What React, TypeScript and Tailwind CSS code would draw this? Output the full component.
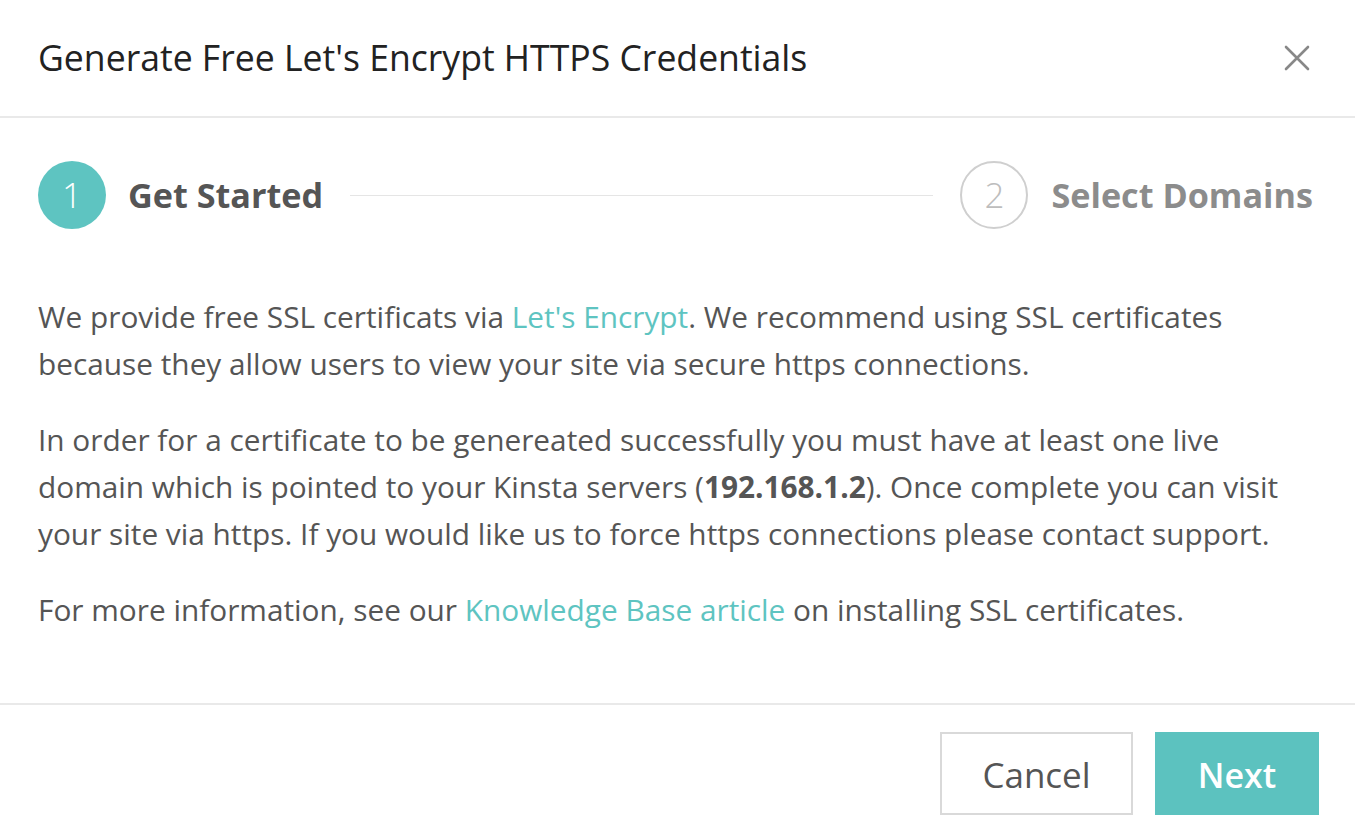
export default function App() {
  return (
    <div className="w-full h-[832px] bg-white overflow-hidden text-[#555]" style={{ fontFamily: '"Open Sans", "Noto Sans", sans-serif' }}>
      <div className="h-[118px] pl-[38px] pr-[44px] flex items-center justify-between border-b-2 border-[#e9e9e9]">
        <h1 className="text-[35.6px] text-[#222]">Generate Free Let's Encrypt HTTPS Credentials</h1>
        <button className="w-[28px] h-[28px] flex items-center justify-center text-[#888]">
          <svg width="26" height="26" viewBox="0 0 26 26" fill="none" stroke="currentColor" strokeWidth="2.6" strokeLinecap="round">
            <path d="M2 2L24 24M24 2L2 24" />
          </svg>
        </button>
      </div>

      <div className="pt-[43px] pl-[38px] pr-[42px] flex items-center">
        <div className="w-[68px] h-[68px] rounded-full bg-[#5ec4c1] text-white flex items-center justify-center text-[35px] font-light">1</div>
        <span className="ml-[22px] text-[34.2px] font-bold text-[#555]">Get Started</span>
        <div className="flex-1 h-px bg-[#e5e5e5] mx-[27px]" />
        <div className="w-[68px] h-[68px] rounded-full border-2 border-[#cfcfcf] text-[#bdbdbd] flex items-center justify-center text-[35px] font-light">2</div>
        <span className="ml-[23px] text-[34.2px] font-bold text-[#8c8c8c]">Select Domains</span>
      </div>

      <div className="pt-[64px] px-[38px] text-[29.8px] leading-[47px] text-[#555] whitespace-nowrap flex flex-col gap-[29px]">
        <p>
          We provide free SSL certificats via <a className="text-[#5ec4c1]">Let's Encrypt</a>. We recommend using SSL certificates
          <br />
          because they allow users to view your site via secure https connections.
        </p>
        <p>
          In order for a certificate to be genereated successfully you must have at least one live
          <br />
          domain which is pointed to your Kinsta servers (<b className="font-bold">192.168.1.2</b>). Once complete you can visit
          <br />
          your site via https. If you would like us to force https connections please contact support.
        </p>
        <p>
          For more information, see our <a className="text-[#5ec4c1]">Knowledge Base article</a> on installing SSL certificates.
        </p>
      </div>

      <div className="mt-[70px] border-t-2 border-[#e9e9e9] pt-[27px] pr-[36px] flex justify-end gap-[22px]">
        <button className="w-[193px] h-[83px] pt-[3px] border-2 border-[#d9d9d9] text-[35px] text-[#555]">Cancel</button>
        <button className="w-[164px] h-[83px] pt-[3px] bg-[#5cc2bf] text-white text-[34px] font-semibold">Next</button>
      </div>
    </div>
  );
}
